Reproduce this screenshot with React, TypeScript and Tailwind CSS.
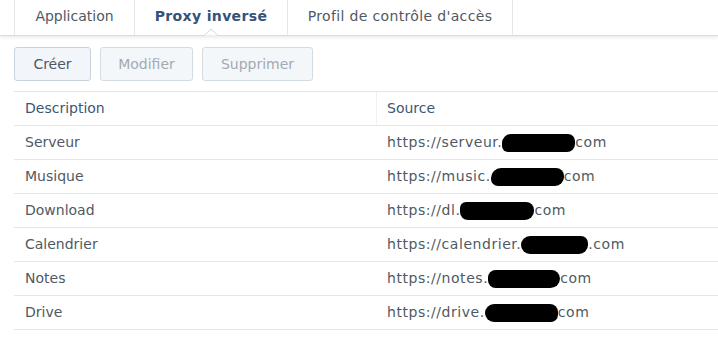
import React from 'react'

const rows = [
  { name: 'Serveur', pre: 'https://serveur.', blob: 'w-[73px] rounded-[9px_7px_8px_6px]', post: 'com' },
  { name: 'Musique', pre: 'https://music.', blob: 'w-[73px] rounded-[10px_8px_9px_7px]', post: 'com' },
  { name: 'Download', pre: 'https://dl.', blob: 'w-[74px] rounded-[6px_8px_9px_8px]', post: 'com' },
  { name: 'Calendrier', pre: 'https://calendrier.', blob: 'w-[67px] rounded-[9px_7px_9px_9px]', post: '.com' },
  { name: 'Notes', pre: 'https://notes.', blob: 'w-[72px] rounded-[8px_9px_10px_8px]', post: 'com' },
  { name: 'Drive', pre: 'https://drive.', blob: 'w-[73px] rounded-[10px_9px_8px_10px]', post: 'com' },
]

function Tab({ label, active, w }: { label: string; active?: boolean; w: string }) {
  return (
    <div
      className={`relative flex h-full items-center justify-center border-l border-[#e4e7eb] pb-[2px] ${w} ${
        active ? 'font-bold tracking-[0.35px] text-[#34527a]' : 'text-[#505963]'
      }`}
    >
      {label}
      {active && (
        <svg className="absolute -bottom-[1px] left-1/2 -ml-[7px]" width="14" height="8" viewBox="0 0 14 8">
          <polyline points="0,7.5 7,1 14,7.5" fill="#ffffff" stroke="#d4d9df" strokeWidth="1" />
        </svg>
      )}
    </div>
  )
}

export default function App() {
  return (
    <div className="h-[352px] w-[718px] overflow-hidden bg-white font-['DejaVu_Sans',sans-serif] text-[14px]">
      <div className="relative flex h-[36px] border-b border-[#d8dde3] pl-[14px] shadow-[0_2px_3px_rgba(0,0,0,0.07)]">
        <Tab label="Application" w="w-[120px]" />
        <Tab label="Proxy inversé" w="w-[153px]" active />
        <div className="flex h-full w-[226px] items-center justify-center border-x border-[#e4e7eb] pb-[2px] tracking-[0.35px] text-[#505963]">
          Profil de contrôle d'accès
        </div>
      </div>

      <div className="flex gap-2 pl-[14px] pt-[11px]">
        <button className="h-[34px] w-[77px] rounded-[3px] border border-[#c9d3dd] bg-[#f2f6fa] text-[#4e5862]">
          Créer
        </button>
        <button className="ml-[1px] h-[34px] w-[93px] rounded-[3px] border border-[#d3dbe3] bg-[#f4f7fa] text-[#a2aab2]">
          Modifier
        </button>
        <button className="ml-[1px] h-[34px] w-[111px] rounded-[3px] border border-[#d3dbe3] bg-[#f4f7fa] text-[#a2aab2]">
          Supprimer
        </button>
      </div>

      <div className="ml-[14px] mt-[10px] border-t border-[#e3e7eb]">
        <div className="flex h-[34px] border-b border-[#e3e7eb] text-[#3d5675]">
          <div className="flex w-[363px] items-center border-r border-[#eef0f3] pl-[11px]">Description</div>
          <div className="flex items-center pl-[10px]">Source</div>
        </div>
        {rows.map((r) => (
          <div key={r.name} className="flex h-[34px] border-b border-[#e3e7eb] text-[#4f5963]">
            <div className="flex w-[363px] items-center pl-[11px]">{r.name}</div>
            <div className="flex items-center pl-[10px] tracking-[0.55px]">
              <span>{r.pre}</span>
              <span className={`inline-block h-[18px] bg-black ${r.blob}`} />
              <span>{r.post}</span>
            </div>
          </div>
        ))}
      </div>
    </div>
  )
}
